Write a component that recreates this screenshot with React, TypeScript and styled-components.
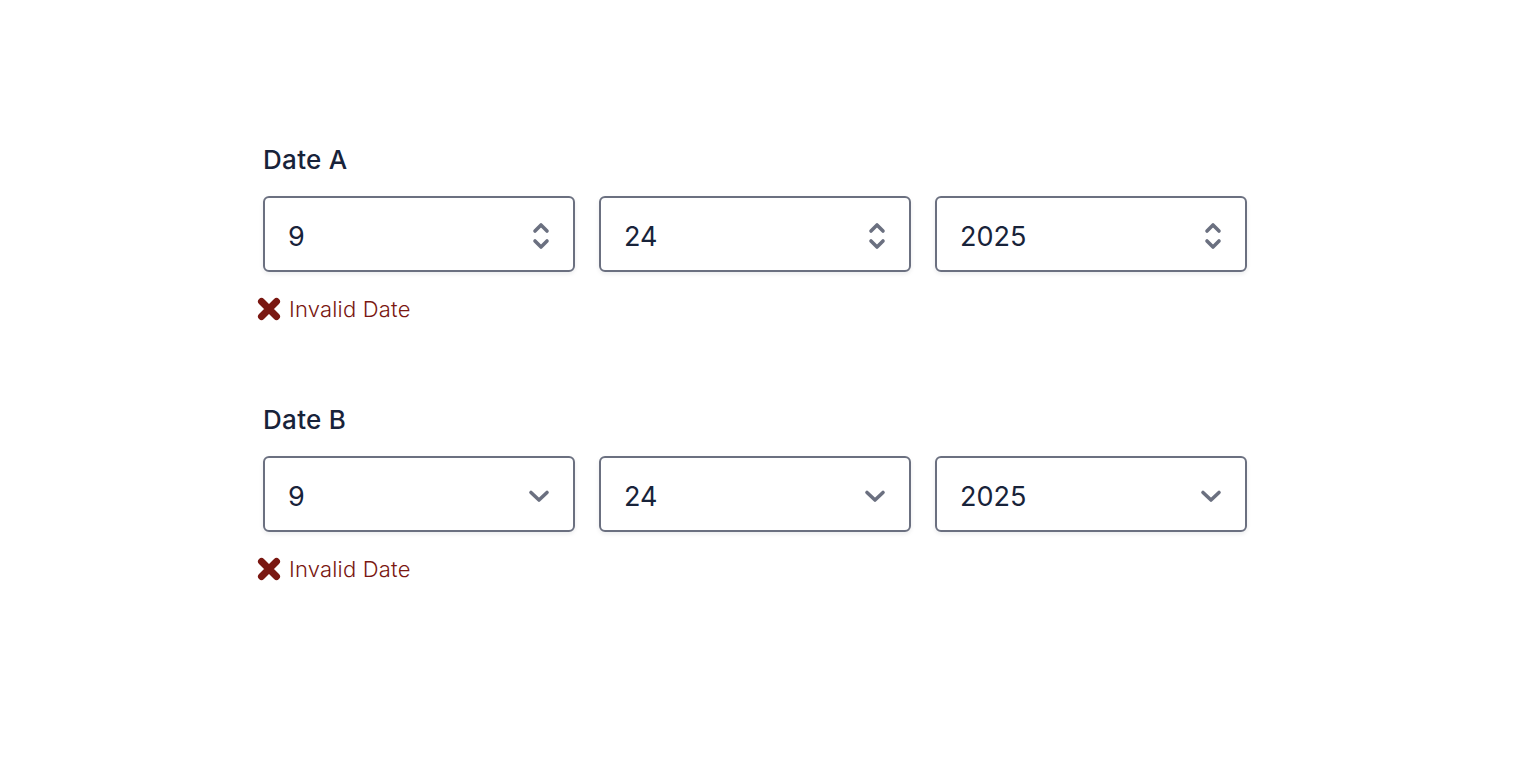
import styled, { createGlobalStyle } from "styled-components";

const GlobalStyle = createGlobalStyle`
  body {
    margin: 0;
    background: #ffffff;
    font-family: Inter, "Noto Sans", sans-serif;
  }
`;

const Page = styled.div`
  padding: 140px 0 0 263px;
  display: flex;
  flex-direction: column;
  gap: 78px;
`;

const Field = styled.div`
  display: flex;
  flex-direction: column;
`;

const Label = styled.div`
  font-size: 26px;
  line-height: 40px;
  font-weight: 500;
  letter-spacing: 0.3px;
  color: #18233a;
  margin-bottom: 16px;
`;

const Row = styled.div`
  display: grid;
  grid-template-columns: repeat(3, 312px);
  gap: 24px;
`;

const Box = styled.div`
  box-sizing: border-box;
  height: 76px;
  border: 2px solid #6b7080;
  border-radius: 6px;
  box-shadow: 0 2px 4px rgba(15, 23, 42, 0.08);
  display: flex;
  align-items: center;
  justify-content: space-between;
  padding: 4px 22px 0 23px;
  font-size: 27px;
  color: #18233a;
`;

const ErrorLine = styled.div`
  display: flex;
  align-items: center;
  gap: 8px;
  margin: 24px 0 0 -6px;
  font-size: 22px;
  line-height: 26px;
  font-weight: 300;
  letter-spacing: 0.2px;
  color: #7a1711;
`;

const Spin = () => (
  <svg width="20" height="30" viewBox="0 0 20 30" fill="none">
    <path d="M4 10 L10 4 L16 10" stroke="#6b7080" strokeWidth="3.6" strokeLinecap="round" strokeLinejoin="round" />
    <path d="M4 20 L10 26 L16 20" stroke="#6b7080" strokeWidth="3.6" strokeLinecap="round" strokeLinejoin="round" />
  </svg>
);

const Chevron = () => (
  <svg width="24" height="20" viewBox="0 0 24 20" fill="none">
    <path d="M4 6.5 L12 14 L20 6.5" stroke="#6b7080" strokeWidth="3.6" strokeLinecap="round" strokeLinejoin="round" />
  </svg>
);

const Cross = () => (
  <svg width="24" height="24" viewBox="0 0 24 24">
    <path d="M4.5 4.5 L19.5 19.5 M19.5 4.5 L4.5 19.5" stroke="#7a1711" strokeWidth="7" strokeLinecap="round" />
  </svg>
);

const values = ["9", "24", "2025"];

function DateField({ label, kind }: { label: string; kind: "spin" | "select" }) {
  return (
    <Field>
      <Label>{label}</Label>
      <Row>
        {values.map((v) => (
          <Box key={v}>
            <span>{v}</span>
            {kind === "spin" ? <Spin /> : <Chevron />}
          </Box>
        ))}
      </Row>
      <ErrorLine>
        <Cross />
        Invalid Date
      </ErrorLine>
    </Field>
  );
}

export default function App() {
  return (
    <>
      <GlobalStyle />
      <Page>
        <DateField label="Date A" kind="spin" />
        <DateField label="Date B" kind="select" />
      </Page>
    </>
  );
}
